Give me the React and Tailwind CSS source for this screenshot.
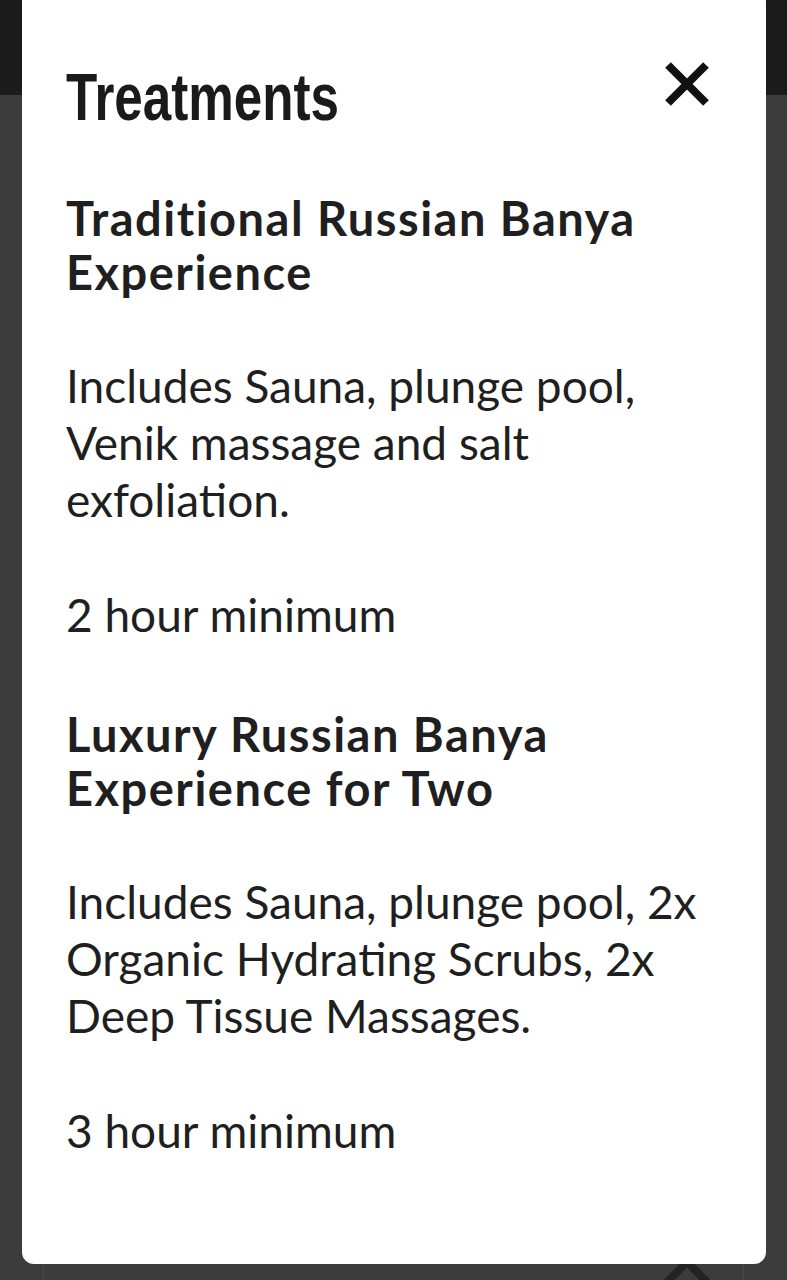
import React from "react";

function CloseIcon() {
  return (
    <svg width="46" height="44" viewBox="0 0 46 44" className="block">
      <path d="M4 3 L42 41 M42 3 L4 41" stroke="#111" strokeWidth="8" fill="none" strokeLinecap="butt" />
    </svg>
  );
}

export default function App() {
  const body = { fontFamily: "Lato, 'Open Sans', sans-serif" };
  return (
    <div className="relative h-[1280px] w-full overflow-hidden bg-[#3c3c3c]" style={body}>
      <div className="h-[95px] bg-[#1b1b1b]" />
      <div className="mx-[43px] mt-[1000px] h-[300px] border-x border-[#474747] flex justify-end pr-[21px] pt-[159px]">
        <svg width="70" height="40" viewBox="0 0 70 40">
          <path d="M5 38 L35 8 L65 38" stroke="#232323" strokeWidth="8" fill="none" />
        </svg>
      </div>

      <div className="absolute left-[22px] top-[-10px] w-[744px] h-[1274px] bg-white rounded-[12px] px-[44px] text-[#1f1f1f]">
        <div className="flex items-start justify-between pt-[74px]">
          <h2
            className="inline-block origin-left scale-x-[0.775] whitespace-nowrap text-[66px] font-bold leading-[66px] text-[#1a1a1a]"
            style={{ fontFamily: "'Liberation Sans', Arial, sans-serif" }}
          >
            Treatments
          </h2>
          <div className="-mt-[2px] mr-[12px]">
            <CloseIcon />
          </div>
        </div>

        <h3 className="mt-[61px] text-[47px] font-bold leading-[54px] tracking-[1.5px]">
          Traditional Russian Banya Experience
        </h3>
        <p className="mt-[58px] text-[46px] leading-[57px]">
          Includes Sauna, plunge pool, Venik massage and salt exfoliation.
        </p>
        <p className="mt-[58px] text-[46px] leading-[57px]">2 hour minimum</p>

        <h3 className="mt-[64px] text-[47px] font-bold leading-[54px] tracking-[1.5px]">
          Luxury Russian Banya Experience for Two
        </h3>
        <p className="mt-[58px] text-[46px] leading-[57px]">
          Includes Sauna, plunge pool, 2x Organic Hydrating Scrubs, 2x Deep Tissue Massages.
        </p>
        <p className="mt-[58px] text-[46px] leading-[57px]">3 hour minimum</p>
      </div>
    </div>
  );
}
